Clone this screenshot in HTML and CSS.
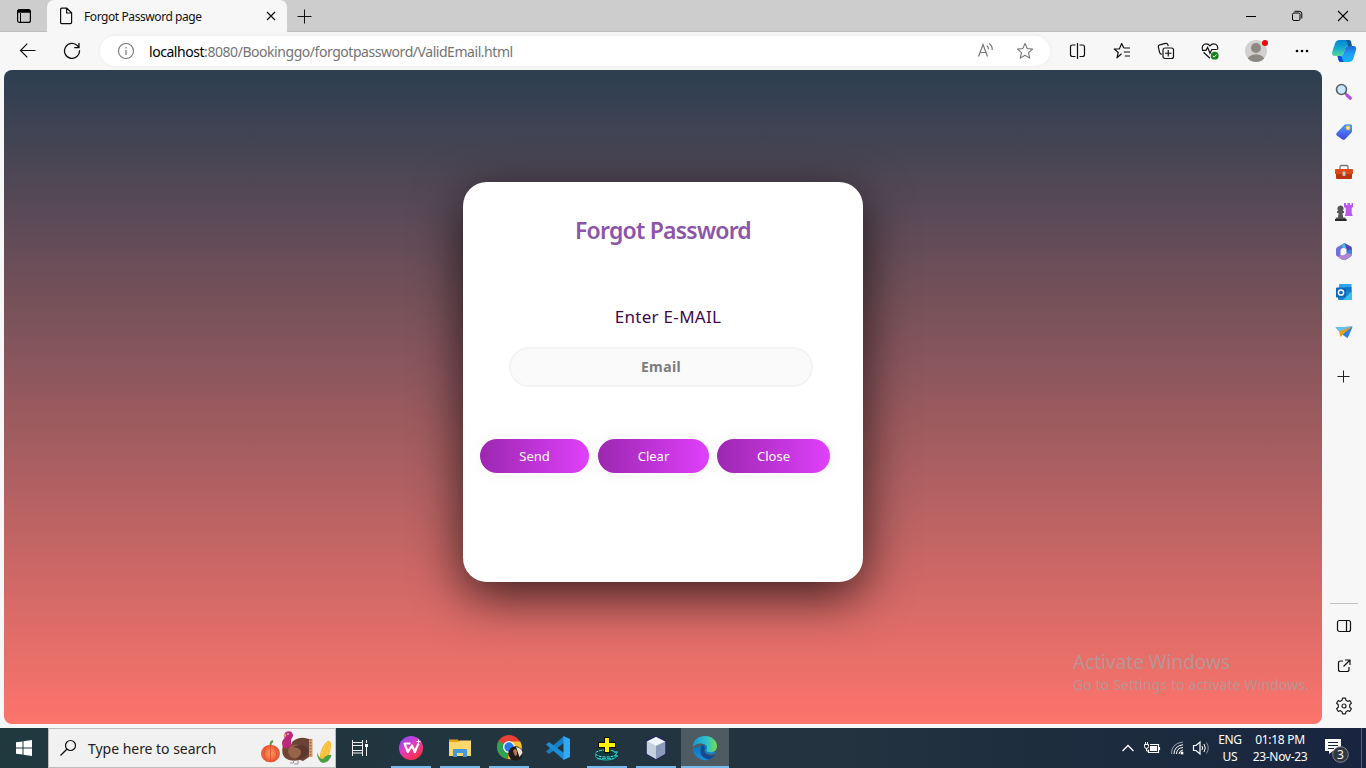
FILE: index.html
```html
<!DOCTYPE html>
<html lang="en">
<head>
<meta charset="utf-8">
<title>Forgot Password page</title>
<link rel="stylesheet" href="styles.css">
</head>
<body>
<div class="desktop">
  <header class="titlebar">
    <div class="tab-menu"><svg width="16" height="16" viewBox="0 0 16 16"><rect x="1.6" y="1.6" width="12.8" height="12.8" rx="2" fill="none" stroke="#000" stroke-width="1.2"/><path d="M1.5 4.8V3q0-1.6 1.700-1.600h9.600q1.700 0 1.700 1.600v1.800z"/><path d="M4.500 5v9" stroke="#000"/></svg></div>
    <div class="tab">
      <svg class="tab-file" width="14" height="18" viewBox="0 0 14 18"><path d="M1.600 2.200q0-1 1-1h5.200l4.800 4.600v9.800q0 1-1 1h-9q-1 0-1-1zM7.600 1.400V6h4.800" fill="none" stroke="#111" stroke-width="1.200"/></svg>
      <span class="tab-title">Forgot Password page</span>
      <svg width="10" height="10" viewBox="0 0 10 10"><path d="M1 1l8 8M9 1l-8 8" stroke="#111" stroke-width="1.200"/></svg>
    </div>
    <div class="new-tab"><svg width="15" height="15" viewBox="0 0 15 15"><path d="M7.500 0.500v14M0.500 7.500h14" stroke="#111"/></svg></div>
    <div class="window-buttons">
      <div class="win-btn"><svg width="12" height="12" viewBox="0 0 12 12"><path d="M1 6.500h10" stroke="#000"/></svg></div>
      <div class="win-btn"><svg width="12" height="12" viewBox="0 0 12 12"><rect x="1.500" y="3" width="7.500" height="7.500" rx="1.500" fill="none" stroke="#000"/><path d="M3.500 1.300h4.700q2.600 0 2.600 2.500v4.700" fill="none" stroke="#000"/></svg></div>
      <div class="win-btn"><svg width="12" height="12" viewBox="0 0 12 12"><path d="M1 1l10 10M11 1L1 11" stroke="#000" stroke-width="1.100"/></svg></div>
    </div>
  </header>

  <div class="toolbar">
    <div class="nav-btn"><svg width="18" height="16" viewBox="0 0 18 16"><path d="M16.500 7.500H1.500M8.300 .7L1.500 7.500l6.800 6.800" fill="none" stroke="#111" stroke-width="1.200"/></svg></div>
    <div class="nav-btn"><svg width="18" height="18" viewBox="0 0 18 18"><path d="M16.500 8.300A7.500 7.500 0 1 1 14.500 3.800L16 5.500M16 1v4.700h-4.800" fill="none" stroke="#111" stroke-width="1.300"/></svg></div>
    <div class="address">
      <svg width="18" height="18" viewBox="0 0 18 18"><circle cx="9" cy="9" r="7.500" fill="none" stroke="#777" stroke-width="1.100"/><path d="M9 8v5M9 5v1.400" stroke="#777" stroke-width="1.200"/></svg>
      <span class="url"><b class="url-host">localhost</b>:8080/Bookinggo/forgotpassword/ValidEmail.html</span>
      <svg class="read-aloud" width="18" height="18" viewBox="0 0 18 18"><path d="M1.500 14.500L6 2.500l4.500 12M3 10.500h6M9.800 3.500q2 1.400 1.600 3.800M12 1.500q3.600 2.500 3.200 6.500" fill="none" stroke="#777" stroke-width="1.200"/></svg>
      <svg width="18" height="18" viewBox="0 0 18 18"><path d="M9 1.500l2.200 5 5.300.600-4 3.600 1.200 5.400L9 13.300l-4.700 2.800 1.200-5.400-4-3.600 5.300-.600z" fill="none" stroke="#777" stroke-width="1.100" stroke-linejoin="round"/></svg>
    </div>
    <div class="tool t44"><svg width="17" height="18" viewBox="0 0 17 18"><path d="M6.500 3H3.500q-2 0-2 2v7.500q0 2 2 2h3M10.500 3h3q2 0 2 2v7.500q0 2-2 2h-3M8.500 1v16" fill="none" stroke="#111" stroke-width="1.200"/></svg></div>
    <div class="tool t46"><svg width="18" height="18" viewBox="0 0 18 18"><path d="M8.500 11.800L4 15.800l1.200-5.300L1.300 7h5L8.700 1.500 10.800 6M10.800 6H17M10.800 10H17M11.800 14H17" fill="none" stroke="#111" stroke-width="1.200" stroke-linejoin="round"/></svg></div>
    <div class="tool t42"><svg width="18" height="18" viewBox="0 0 18 18"><rect x="6" y="6" width="10.500" height="10.500" rx="2" fill="none" stroke="#111" stroke-width="1.200"/><path d="M11.250 8v6.500M8 11.250h6.500M4.800 12.300Q3 12 2.600 10.300L1.300 5Q1 3.300 2.700 2.900L8.600 1.400q1.700-.400 2.200 1.300l.4 1.500" fill="none" stroke="#111" stroke-width="1.200"/></svg></div>
    <div class="tool t46"><svg width="18" height="18" viewBox="0 0 18 18"><path d="M1.500 7.700Q.5 4 3.300 2.300 6.600.9 9 3.800q2.400-2.900 5.700-1.500Q17.500 4 16.500 7.700M1 8.300h4l1.600-3 2.400 6 1.800-3.800h5M2.500 10.300l6.500 6" fill="none" stroke="#111" stroke-width="1.200"/><circle cx="13.700" cy="13.700" r="3.900" fill="#16811d"/><path d="M11.900 13.800l1.300 1.300 2.300-2.600" fill="none" stroke="#fff"/></svg></div>
    <div class="tool t46"><svg width="24" height="24" viewBox="0 0 24 24"><defs><clipPath id="avatar"><circle cx="12" cy="12" r="11"/></clipPath></defs><g clip-path="url(#avatar)"><path d="M0 0h24v24H0z" fill="#d2d0ce"/><circle cx="12" cy="9" r="5" fill="#8c8884"/><ellipse cx="12" cy="21" rx="8.500" ry="5.800" fill="#8c8884"/></g><circle cx="21" cy="4" r="3" fill="#e60c0c"/></svg></div>
    <div class="tool t46"><svg width="16" height="6" viewBox="0 0 16 6"><circle cx="3" cy="3" r="1.300"/><circle cx="8" cy="3" r="1.300"/><circle cx="13" cy="3" r="1.300"/></svg></div>
    <div class="tool t38"><svg width="26" height="26" viewBox="0 0 26 26"><defs><linearGradient id="cpa" x2="0" y2="1"><stop stop-color="#0a84d6"/><stop offset=".5" stop-color="#12a9ce"/><stop offset="1" stop-color="#55da9a"/></linearGradient><linearGradient id="cpb" x2="0" y2="1"><stop stop-color="#1d68d8"/><stop offset=".5" stop-color="#219cf5"/><stop offset="1" stop-color="#12b6f7"/></linearGradient></defs><path d="M8.500 2H18q1.500 0 2 2l.8 4H17q-2 0-2.700 2l-2 6q-.8 2-2.800 2H4Q.3 18 1.200 14L4 5.500Q5 2 8.500 2z" fill="url(#cpa)"/><path d="M14.500 2H18q1.500 0 2 2l.8 4H17q-1-5-2.500-6z" fill="#086092"/><path d="M17.500 8H22q4 0 3 4l-2.800 9q-1 3-4.500 3H9.500Q8 24 7.500 22L6.500 18h3q2 0 2.800-2l2-6q.7-2 3.200-2z" fill="url(#cpb)"/><path d="M6.500 18h3q1.300 0 2 3.500.5 2 1.800 2.500H9.500Q8 24 7.500 22z" fill="#164bd9"/></svg></div>
  </div>

  <div class="browser-body">
    <main class="page">
      <section class="card">
        <h1 class="card-title">Forgot Password</h1>
        <div class="field-label">Enter E-MAIL</div>
        <input class="email" type="text" placeholder="Email">
        <div class="actions">
          <button class="btn btn-send">Send</button>
          <button class="btn btn-clear">Clear</button>
          <button class="btn btn-close">Close</button>
        </div>
      </section>
      <div class="watermark">
        <div class="wm-title">Activate Windows</div>
        <div class="wm-text">Go to Settings to activate Windows.</div>
      </div>
    </main>
    <aside class="sidebar">
      <div class="side-item"><svg width="18" height="18" viewBox="0 0 18 18"><path d="M10 10l2.500 2.500" stroke="#666" stroke-width="2"/><path d="M12 12.200l3.300 3" stroke="#b84be8" stroke-width="3.200" stroke-linecap="round"/><circle cx="6.500" cy="6.500" r="5" fill="#c9e6fa" stroke="#59606a" stroke-width="1.600"/></svg></div>
      <div class="side-item"><svg width="18" height="18" viewBox="0 0 18 18"><defs><linearGradient id="tag" x2="0" y2="1"><stop stop-color="#4d9cff"/><stop offset="1" stop-color="#4145dc"/></linearGradient></defs><path d="M9.500 1.800q.6-.6 1.500-.6h4.500Q17 1.200 17 2.700V8q0 1-.7 1.700L10 16.200q-1.400 1.300-2.800 0L1.800 12.500q-1.400-1.400 0-2.800z" fill="url(#tag)"/><circle cx="13" cy="4.800" r="1.700" fill="#fff" stroke="#ffca3b" stroke-width="1.300"/></svg></div>
      <div class="side-item"><svg width="20" height="18" viewBox="0 0 20 18"><path d="M6 6V4q0-1.500 1.500-1.500h5Q14 2.500 14 4v2" fill="none" stroke="#777" stroke-width="1.300"/><rect x="2" y="8" width="16" height="8" rx="1" fill="#b83510"/><path d="M1 7q0-1 1-1h16q1 0 1 1v4H1z" fill="#dc4a18"/><rect x="8.500" y="8.500" width="3" height="4.500" rx="1" fill="#c5c9cc"/></svg></div>
      <div class="side-item"><svg width="20" height="20" viewBox="0 0 20 20"><path d="M10 1h2v2h1.500V1H16v2h1.500V1H19v4l-1.300 1v5l1 3h-8l1-3V6L10 5z" fill="#bc57f0"/><path d="M6.500 3.500a3.300 3.300 0 0 1 2.200 5.600h1.300V11H8.500l.7 4.500H11q1.500 1 1.500 3.500H1q0-2.500 1.500-3.500H4L4.600 11H3V9.100h1.300A3.300 3.300 0 0 1 6.500 3.500z" fill="#555"/><path d="M1 17h11.500v2H1z" fill="#292929"/></svg></div>
      <div class="side-item"><svg width="18" height="20" viewBox="0 0 18 20"><path d="M9.500 1l6 3.300Q17 5 17 7v5l-5.500-3V7.500q0-1.200-1-1.800L7 3.500z" fill="#5146b5"/><path d="M17 7v5q0 1.800-1.500 2.700l-5 3Q9 18.500 7.500 17.700L4.500 16l6-3.200q1-.6 1-1.800V9z" fill="#3184df"/><path d="M17 12q0 1.800-1.500 2.700l-5 3Q9 18.500 7.500 17.700L3 15q-1.500-.8-2-2.500l5 .5q1.500.6 3 0l3-2z" fill="#b184d2"/><path d="M7 2.500L9.500 1l2 6-2-1Q8.500 5.400 7.500 6l-1 .8q-1 .6-1 1.900v4.500L3 14.600Q1 13.500 1 12V7.500Q1 5.800 2.500 5z" fill="#6d72d9"/><path d="M9.500 1l2 6-2-1Q8.500 5.400 7.500 6L7 2.500z" fill="#4db8e6"/></svg></div>
      <div class="side-item"><svg width="18" height="18" viewBox="0 0 18 18"><path d="M4 1.500q0-.5.5-.5H16q.5 0 .5.500V8H4z" fill="#29a8ea"/><path d="M10 4h6.500v4H10z" fill="#0e78ce"/><path d="M3 8h14v8q0 1-1 1H4q-1 0-1-1z" fill="#1686d4"/><path d="M17 8v8q0 1-1 1H8z" fill="#39bff2"/><rect x="1" y="4.500" width="10" height="10" rx="1" fill="#0968b8"/><circle cx="6" cy="9.500" r="2.600" fill="none" stroke="#fff" stroke-width="1.500"/></svg></div>
      <div class="side-item"><svg width="18" height="18" viewBox="0 0 18 18"><path d="M.5 4.500L17.500 3.500 12.500 15 8 12z" fill="#278fdc"/><path d="M.5 4.500L17.500 3.500 4.500 8.500z" fill="#66c4f0"/><path d="M4 8.500l13.500-5L8 11.500 5.500 14z" fill="#ee9d1a"/><path d="M8 11.500l9.500-8-5 11.500z" fill="#2c80ec"/></svg></div>
      <div class="side-item side-plus"><svg width="13" height="13" viewBox="0 0 13 13"><path d="M6.500 .5v12M.5 6.500h12" stroke="#222"/></svg></div>
      <div class="side-bottom">
        <div class="side-item"><svg width="16" height="16" viewBox="0 0 16 16"><rect x="1.500" y="2.500" width="13" height="11" rx="2" fill="none" stroke="#111" stroke-width="1.200"/><path d="M10.500 2.500v11" stroke="#111" stroke-width="1.200"/></svg></div>
        <div class="side-item"><svg width="16" height="16" viewBox="0 0 16 16"><path d="M7 3H4.500q-2 0-2 2v6.500q0 2 2 2H11q2 0 2-2V9M9 2h5v5M14 2L7.500 8.500" fill="none" stroke="#111" stroke-width="1.200"/></svg></div>
        <div class="side-item"><svg width="18" height="18" viewBox="0 0 18 18"><path d="M7 3.300l.5-2.200h3l.5 2.200 1.700 1 2.200-.6 1.500 2.500-1.700 1.600v2.400l1.700 1.600-1.500 2.500-2.200-.6-1.700 1-.5 2.200h-3L7 14.700l-1.700-1-2.200.6-1.500-2.500 1.700-1.600V7.800L1.600 6.200l1.500-2.500 2.200.6z" fill="none" stroke="#222" stroke-width="1.200" stroke-linejoin="round"/><circle cx="9" cy="9" r="2" fill="none" stroke="#222" stroke-width="1.200"/></svg></div>
      </div>
    </aside>
  </div>

  <footer class="taskbar">
    <div class="task start"><svg width="16" height="16" viewBox="0 0 16 16"><path d="M0 2.300L6.500 1.400V7.500H0zM7.500 1.200L16 0v7.500H7.500zM0 8.500h6.500v6.100L0 13.700zM7.500 8.500H16V16l-8.500-1.200z" fill="#fff"/></svg></div>
    <div class="search">
      <svg width="18" height="18" viewBox="0 0 18 18"><circle cx="10.500" cy="6.500" r="5" fill="none" stroke="#111" stroke-width="1.200"/><path d="M6.800 10.200L.5 16.500" stroke="#111" stroke-width="1.300"/></svg>
      <span class="search-text">Type here to search</span>
      <svg class="harvest" width="72" height="36" viewBox="0 0 72 36">
        <defs><radialGradient id="pumpkin"><stop stop-color="#ff9a64"/><stop offset="1" stop-color="#e9522f"/></radialGradient></defs>
        <path d="M10.500 15q0-3 2.500-4" fill="none" stroke="#5b9a42" stroke-width="2"/><ellipse cx="10.500" cy="23.500" rx="9.500" ry="8.800" fill="url(#pumpkin)"/><path d="M10.500 15v17M6.500 16q-4 8 0 15.500M14.500 16q4 8 0 15.500" fill="none" stroke="#dc4c2b" stroke-width=".7"/>
        <path d="M48 9h4.500v18H48z" fill="#df9d6d"/>
        <path d="M50.500 9v18" stroke="#a96b50" stroke-dasharray="1.500 1.500" stroke-width="2"/>
        <path d="M32 12q6-5 13-4l4 1v18l-6 4-9-3z" fill="#6a4336"/>
        <path d="M23 15q-3 12 6 15 12 3 17-6L38 13q-5-2-8 3z" fill="#71452f"/>
        <ellipse cx="36" cy="21.500" rx="8" ry="7" fill="#956449"/>
        <path d="M33 17q9 1 8 6-1 4-6 6 11 1 14-9-5-8-16-3z" fill="#5b372d"/>
        <path d="M27 1.500q5-1.500 6 3.500 0 2-1.500 3.500-1 2 0 5-1 5-5 5-4 0-4.500-5 0-3 2.500-5.500Q23 3 27 1.500z" fill="#bd2777"/>
        <path d="M26.500 3.500l-3.500 2 3 1.500z" fill="#eeb04b"/><circle cx="28" cy="4" r=".8" fill="#fff"/>
        <path d="M33.500 30v3H30M38 30v4h-4" fill="none" stroke="#9d91a1"/>
        <path d="M68.500 10.500q3 1 2.500 6-.5 9-6 13-6 0-5-5 2-10 8.500-14z" fill="#f6bf37"/><path d="M67.500 13q-4 5-5.500 12M69.500 15q-1 6-5 11" stroke="#fbe080" fill="none" stroke-dasharray="1.500 1"/>
        <path d="M57 22q2 7 6 7 4-5 8.500-4-2 7.500-8.500 8-6-2-6-11z" fill="#4c9f40"/>
      </svg>
    </div>
    <div class="task task-view"><svg width="18" height="18" viewBox="0 0 18 18"><path d="M1.500 1v2.500h10V1M1.500 17v-3h10v3M1.500 6.500h10v5h-10zM1.500 3.500v11M11.500 3.500v11M15.500 1v3M15.500 8v9" fill="none" stroke="#eee"/><path d="M14 5h3v3h-3z" fill="#fff"/></svg></div>
    <div class="apps">
      <div class="app running"><svg width="26" height="26" viewBox="0 0 26 26"><defs><linearGradient id="wps" x2="0.700" y2="1"><stop stop-color="#774cff"/><stop offset=".5" stop-color="#e43bc0"/><stop offset="1" stop-color="#ff303e"/></linearGradient></defs><circle cx="13" cy="13" r="12" fill="url(#wps)"/><path d="M12.500 8.500H6.500l3.300 8.500 4.200-6.500 2.800 6.500 3.700-8.500" fill="none" stroke="#fff" stroke-width="2.200" stroke-linejoin="round"/><path d="M20.500 4.500v4M18.500 6.500h4" stroke="#fff"/></svg></div>
      <div class="app running"><svg width="24" height="24" viewBox="0 0 24 24"><path d="M1 3.500h9l2 3H1z" fill="#eaa21c"/><path d="M1 6h9l2-1.500h11V20H1z" fill="#ffd869"/><path d="M5 21v-7q0-1 1-1h12q1 0 1 1v7h-4v-4H9v4z" fill="#419ade"/></svg></div>
      <div class="app running"><svg class="chrome" width="28" height="28" viewBox="0 0 28 28"><circle cx="13" cy="13" r="12" fill="#e84133"/><path d="M13 13L2.600 7A12 12 0 0 0 12 25z" fill="#2ea350"/><path d="M13 13l3-5.500h8.300A12 12 0 0 1 12 25z" fill="#fac22a"/><circle cx="13" cy="13" r="6" fill="#fff"/><circle cx="13" cy="13" r="4.700" fill="#2879ec"/><circle cx="19.500" cy="19.500" r="7.200" fill="#211a18"/><path d="M20 13q6 1 6.500 6l-3 4z" fill="#e7e3db"/><path d="M17 17q2-4 4 0v4l-2 1z" fill="#af744f"/></svg></div>
      <div class="app"><svg width="26" height="26" viewBox="0 0 26 26"><path d="M19 1v7L4 19l-3-2.500z" fill="#1680c4"/><path d="M1 9.500L4 7l15 11v7z" fill="#1c8dd5"/><path d="M18.500 1l6.500 3v18l-6.500 3z" fill="#32a7f2"/></svg></div>
      <div class="app running"><svg width="26" height="26" viewBox="0 0 26 26"><ellipse cx="12" cy="21" rx="10.500" ry="4" fill="#082b30" stroke="#16b9b8"/><ellipse cx="12" cy="18.500" rx="10.500" ry="3.500" fill="#0c3c40" stroke="#5ff1e7" stroke-dasharray="3 1"/><path d="M3 23.500h17M20 17h4M20 21h4" stroke="#1eb9b8" stroke-width="1.500" stroke-dasharray="4 1"/><path d="M10 2h5v5h6v5h-6v5h-5v-5H4V7h6z" fill="#fff100" stroke="#121204" shape-rendering="crispEdges"/></svg></div>
      <div class="app running"><svg width="26" height="26" viewBox="0 0 26 26"><path d="M13 1l10 5v13l-10 6-10-6V6z" fill="#9eacc3" stroke="#25285a" stroke-width="1.500"/><path d="M4 7l9 4v13l-9-5z" fill="#c5d1de"/><path d="M4 6.500L13 2l9 4.500-9 4.500z" fill="#eef5f9"/><path d="M13 11l9-4v12l-9 5z" fill="#899abb"/></svg></div>
      <div class="app active"><svg width="26" height="26" viewBox="0 0 26 26"><defs><linearGradient id="edge" x2="1"><stop stop-color="#159ad3"/><stop offset=".6" stop-color="#32c4c8"/><stop offset="1" stop-color="#72df49"/></linearGradient><linearGradient id="edgeb" x2="0" y2="1"><stop stop-color="#0b74bd"/><stop offset="1" stop-color="#1b8cda"/></linearGradient></defs><path d="M1 13a12 12 0 0 0 21.500 7.500L24 18 14 10z" fill="url(#edgeb)"/><path d="M1 12.500C1 5 6 1 13 1c7 0 12 5 12 10 0 5-4 7-8 6-3 0-3-2-2-3.500Q15.500 9 9 8.500q-6 0-8 4z" fill="url(#edge)"/><path d="M10 10q-5 11 6 14.500 5-1 7.500-5-6 2-9.500-1-2.500-2-1-5.500Q12 10 10 10z" fill="#114a91"/><path d="M13 13.500q-1 5 5 5.800 3 .3 5.500-1.300l1 1q-7 4-11.500-1-1-2 0-4.500z" fill="#4e5b63"/></svg></div>
    </div>
    <div class="tray">
      <svg width="14" height="10" viewBox="0 0 14 10"><path d="M1.500 8L7 2.500 12.500 8" fill="none" stroke="#fff" stroke-width="1.300"/></svg>
      <svg class="battery" width="18" height="14" viewBox="0 0 18 14"><path d="M1.500 3.500h4v2q0 2-2 2t-2-2zM2.500 1v2.500M4.500 1v2.500M3.500 7v3h2" fill="none" stroke="#fff"/><path d="M7 3.500h8.500v8h-10v-3M16.500 6v3" fill="none" stroke="#fff" stroke-width="1.200"/><path d="M7 5h7v5H7z" fill="#fff"/></svg>
      <svg class="wifi" width="16" height="16" viewBox="0 0 16 16"><g fill="none" stroke="#fff"><path d="M9 14q0-3 4-4M6.500 14q0-6 6.500-6.500M4 14q0-8 9-9.300" /><path d="M1.500 14Q1 3.500 13 2" stroke="#9ba5b2"/></g><circle cx="12" cy="13" r="1.500" fill="#fff"/></svg>
      <svg class="volume" width="18" height="16" viewBox="0 0 18 16"><path d="M1.500 5.500H4L8 2v12l-4-3.500H1.500z" fill="none" stroke="#fff" stroke-width="1.200"/><path d="M10 6q1 2 0 4M12 4q2.500 4 0 8" fill="none" stroke="#fff"/><path d="M14.500 2.500q3.500 5.500 0 11" fill="none" stroke="#8793a3"/></svg>
      <div class="lang"><span>ENG</span><span>US</span></div>
      <div class="clock"><span>01:18 PM</span><span>23-Nov-23</span></div>
      <svg class="notice" width="26" height="26" viewBox="0 0 26 26"><path d="M1 1h16v12H9l-4 3v-3H1z" fill="#fff"/><path d="M4 4.500h10M4 7.500h10M4 10.500h6" stroke="#17253c"/><circle cx="16.500" cy="16.500" r="7.800" fill="#303740" stroke="#84888f"/><text x="16.500" y="20.800" text-anchor="middle" class="badge-text">3</text></svg>
      <div class="show-desktop"></div>
    </div>
  </footer>
</div>
</body>
</html>
```
FILE: styles.css
```css
* { box-sizing: border-box; }
body { margin: 0; overflow: hidden; font-family: "Noto Sans", sans-serif; }
svg { display: block; flex: none; }
.desktop { width: 1366px; height: 768px; display: flex; flex-direction: column; background: #f7f7f7; }

.titlebar { height: 32px; flex: none; display: flex; background: #cdcdcd; box-shadow: inset 0 -1px #bdbdbd; }
.tab-menu { width: 47px; display: flex; align-items: center; justify-content: center; }
.tab { width: 240px; height: 32px; display: flex; align-items: center; padding: 0 11px 0 12px; background: #f7f7f7; border-radius: 7px 7px 0 0; }
.tab-title { flex: 1; margin-left: 11px; font-size: 12px; letter-spacing: -0.42px; color: #111; white-space: nowrap; }
.new-tab { width: 35px; display: flex; align-items: center; justify-content: center; }
.window-buttons { margin-left: auto; display: flex; }
.win-btn { width: 46px; display: flex; align-items: center; justify-content: center; }

.toolbar { height: 38px; flex: none; display: flex; align-items: center; padding-left: 6px; }
.nav-btn { width: 44px; display: flex; justify-content: center; }
.address { width: 950px; height: 30px; margin: 0 5px 0 6px; border-radius: 15px; background: #fff; display: flex; align-items: center; padding: 0 16px 0 17px; box-shadow: 0 0 4px rgba(0, 0, 0, .06); }
.url { flex: 1; margin-left: 14px; font-size: 14px; letter-spacing: -0.45px; color: #747474; white-space: nowrap; }
.url-host { font-weight: 400; color: #000; }
.read-aloud { margin-right: 21px; }
.tool { display: flex; justify-content: center; }
.t38 { width: 38px; }
.t42 { width: 42px; }
.t44 { width: 44px; }
.t46 { width: 46px; }

.browser-body { height: 658px; flex: none; display: flex; padding-left: 4px; }
.page { width: 1318px; height: 654px; position: relative; display: flex; justify-content: center; align-items: flex-start; padding-top: 112px; border-radius: 8px; overflow: hidden; background: linear-gradient(to top, #fd746c, #2c3e50); }
.card { width: 400px; height: 400px; border-radius: 24px; background: #fff; box-shadow: 0 14px 50px rgba(0, 0, 0, .7); display: flex; flex-direction: column; }
.card-title { margin: 31px 0 0; height: 34px; line-height: 34px; text-align: center; color: #8c55aa; font-size: 23px; font-weight: 600; letter-spacing: -0.78px; }
.field-label { margin: 58px 0 0 10px; height: 24px; line-height: 24px; text-align: center; color: #3f0a4c; font-size: 17px; letter-spacing: .3px; }
.email { width: 304px; height: 40px; margin: 18px 0 0 46px; border: 2px solid #f4f4f4; border-radius: 20px; background: #fafafa; text-align: center; font: 700 14px "Noto Sans", sans-serif; letter-spacing: .4px; padding: 0 0 1px; }
.email::placeholder { color: #7d7d7d; opacity: 1; }
.actions { display: flex; margin: 52px 0 0 17px; }
.btn { height: 34px; border: 0; border-radius: 17px; padding: 0; color: #fff; font: 13px "Noto Sans", sans-serif; background: linear-gradient(to right, #9c27b0, #e040fb); box-shadow: 0 0 20px 1px rgba(0, 0, 0, .04); }
.btn-send { width: 109px; margin-right: 9px; }
.btn-clear { width: 111px; margin-right: 8px; }
.btn-close { width: 113px; }
.watermark { position: absolute; left: 1069px; top: 580px; color: #b99492; white-space: nowrap; }
.wm-title { font-size: 19px; line-height: 24px; }
.wm-text { font-size: 14px; line-height: 21px; letter-spacing: .12px; }

.sidebar { width: 44px; height: 658px; display: flex; flex-direction: column; padding-top: 2px; }
.side-item { height: 40px; display: flex; align-items: center; justify-content: center; }
.side-plus { height: 48px; padding-right: 1px; }
.side-bottom { margin: auto 8px 2px; border-top: 1px solid #c1c1c1; padding-top: 2px; }

.taskbar { height: 40px; flex: none; display: flex; background: linear-gradient(to right, #20393f, #21353f 35%, #23333f 60%, #1d2c3e 80%, #192540); }
.task { width: 48px; display: flex; align-items: center; justify-content: center; }
.search { width: 288px; background: #f1f1f1; border: 1px solid #bdbdbd; display: flex; align-items: center; padding-left: 11px; }
.search-text { flex: 1; margin-left: 10px; font-size: 14px; letter-spacing: -0.03px; color: #222; white-space: nowrap; }
.harvest { margin-right: 3px; }
.apps { display: flex; gap: 1px; margin-left: 3px; }
.app { width: 48px; height: 40px; display: flex; align-items: center; justify-content: center; background: linear-gradient(#76b9ed, #76b9ed) bottom center / 0 2px no-repeat; }
.chrome { margin-left: 2px; }
.running { background-size: 40px 2px; }
.active { background-size: 48px 2px; background-color: #4e5b63; }
.tray { margin-left: auto; display: flex; align-items: center; color: #fff; }
.battery { margin-left: 8px; }
.wifi { margin-left: 9px; }
.volume { margin-left: 6px; }
.lang, .clock { display: flex; flex-direction: column; align-items: center; font-size: 12px; line-height: 17px; letter-spacing: -0.3px; white-space: nowrap; }
.lang { width: 36px; margin-left: 2px; }
.clock { width: 64px; }
.notice { margin: 6px 0 0 12px; }
.badge-text { fill: #fff; font-size: 12px; }
.show-desktop { width: 1px; height: 40px; margin: 0 4px 0 11px; background: #566075; }
```
